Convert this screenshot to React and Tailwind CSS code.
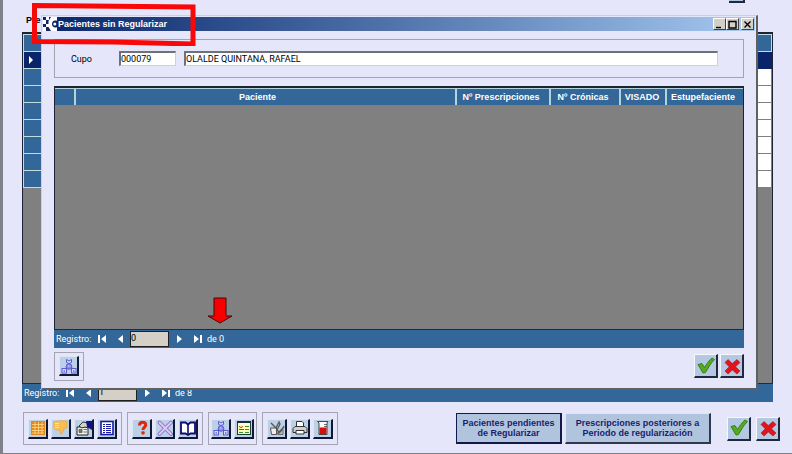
// src/App.jsx
import React, { useState } from "react";

const FONT = "font-['Roboto','Liberation_Sans',sans-serif]";
const BOLD = "font-['Liberation_Sans',sans-serif] font-bold";

/* ---------- icons ---------- */

function GridIcon() {
  return (
    <svg viewBox="0 0 16 16" className="w-4 h-4">
      <rect x="1" y="1" width="14" height="14" fill="#e08a1e" />
      <path d="M2 4.5h12M2 7.5h12M2 10.5h12M2 13h12M5 2v12M8.5 2v12M12 2v12" stroke="#ffd98a" strokeWidth=".8" />
    </svg>
  );
}

function ThumbDownIcon() {
  return (
    <svg viewBox="0 0 16 16" className="w-4 h-4">
      <path d="M1 2l4-1h9v7h-3v2L8 14.5 7 10H3L1 8z" fill="#fbbc50" stroke="#e9a94a" strokeWidth=".8" />
      <path d="M2 3.5h4M2 5.5h4M2 7.5h4" stroke="#fff0c4" strokeWidth=".8" />
    </svg>
  );
}

function HandCardIcon() {
  return (
    <svg viewBox="0 0 16 16" className="w-4 h-4">
      <path d="M1 7h11v8H1z" fill="#f0f0ea" stroke="#222" />
      <path d="M3 9.5h3v3H3zM7.5 9.5H11M7.5 12H11" fill="#777" stroke="#555" strokeWidth=".8" />
      <path d="M3 6l4-4 5 1v5L9 7 6 8z" fill="#d6d2c4" stroke="#222" strokeWidth=".9" />
      <path d="M10 1h6v9l-5-3z" fill="#10108c" />
    </svg>
  );
}

function ListIcon() {
  return (
    <svg viewBox="0 0 16 16" className="w-4 h-4">
      <rect x="2" y="1.5" width="12" height="13" fill="#fff" stroke="#1a1aa0" strokeWidth="1.6" />
      <path d="M4 4.5h8M4 6.5h8M4 8.5h8M4 10.5h8M4 12.5h8" stroke="#1a1aa0" strokeWidth="1.1" />
      <path d="M6.5 3v11" stroke="#fff" />
    </svg>
  );
}

function HelpIcon() {
  return (
    <svg viewBox="0 0 16 16" className="w-4 h-4">
      <path d="M5.5 5.5C5.5 3 7 2.3 8.5 2.3c2 0 3.2 1 3.2 2.7 0 2.2-2.7 2.2-2.7 5" fill="none" stroke="#e0280c" strokeWidth="3" />
      <rect x="7.4" y="11.3" width="3.2" height="3.2" rx="1" fill="#e0280c" />
    </svg>
  );
}

function DeleteIcon() {
  return (
    <svg viewBox="0 0 16 16" className="w-4 h-4">
      <path d="M2.5 2.5L14 14M14 2.5L2.5 14" stroke="#8a6fd0" strokeWidth="3.8" strokeLinecap="round" />
      <path d="M2.5 2.5L14 14M14 2.5L2.5 14" stroke="#dcc8f4" strokeWidth="2" strokeLinecap="round" />
    </svg>
  );
}

function BookIcon() {
  return (
    <svg viewBox="0 0 16 16" className="w-4 h-4">
      <path d="M1 2.5h4.5L8 4.5l2.5-2H15v11h-4.5L8 15l-2.5-1.5H1z" fill="#fff" stroke="#0c0c70" strokeWidth="1.8" />
      <path d="M8 5v9" stroke="#0c0c70" strokeWidth="1.6" />
    </svg>
  );
}

function NetworkIcon() {
  return (
    <svg viewBox="0 0 16 16" className="w-4 h-4">
      <g fill="#d8dcfa" stroke="#5a5ad0">
        <path d="M5.5 9.5L3.5 11M10.5 9.5l2 1.5" />
        <path d="M5.5 1.5L8 3l2.5-1.5v3L8 5.5l-2.500-1z" />
        <circle cx="8" cy="8.500" r="2.800" fill="#8c8cec" />
        <rect x="1" y="10.500" width="4.500" height="4.500" />
        <rect x="10.500" y="10.500" width="4.500" height="4.500" />
      </g>
      <path d="M3.200 12v2M12.800 12v2" stroke="#5a5ad0" />
      <path d="M7 8h1.500" stroke="#d8dcfa" />
    </svg>
  );
}

function FormIcon() {
  return (
    <svg viewBox="0 0 16 16" className="w-4 h-4">
      <rect x="1.5" y="1.5" width="13" height="13" fill="#fbfbb4" stroke="#1c3c3c" />
      <path d="M1 2h14" stroke="#12303a" strokeWidth="2" />
      <path d="M2 4h12" stroke="#fff" />
      <path d="M3 6.5l2 1 2-1M3 9.5h5" fill="none" stroke="#c03020" />
      <path d="M9 6.5h4M9 9.5h4M3 12.5h4M9 12.5h4" stroke="#3c8a30" />
    </svg>
  );
}

function ToolsIcon() {
  return (
    <svg viewBox="0 0 16 16" className="w-4 h-4">
      <path d="M1.5 8h6v6.500h-5z" fill="#eee" stroke="#555" />
      <path d="M2 3l5 5 3-6 1 2-3 6 3 3 4-7M8 14l7-7" fill="none" stroke="#555" strokeWidth="1.3" />
      <path d="M9 14.500l5-5v5z" fill="#bbb" stroke="#555" strokeWidth=".8" />
    </svg>
  );
}

function PrintIcon() {
  return (
    <svg viewBox="0 0 16 16" className="w-4 h-4">
      <path d="M4.5 7V1.5H10L11.5 3v4" fill="#fff" stroke="#333" />
      <path d="M3 6.5h10l2 2v4H1v-4z" fill="#d0d0d0" stroke="#333" />
      <path d="M4 10.5h8V14H4z" fill="#fff" stroke="#333" />
    </svg>
  );
}

function BeakerIcon() {
  return (
    <svg viewBox="0 0 16 16" className="w-4 h-4">
      <path d="M2.5 1.5H13L12 3v11.500H4V3z" fill="#fff" stroke="#444" />
      <path d="M4.5 7.5h7V14h-7z" fill="#d80c0c" />
      <path d="M9 4.5h3M9 6.500h3" stroke="#444" strokeWidth=".8" />
    </svg>
  );
}

function CheckIcon() {
  return (
    <svg viewBox="0 0 20 20" className="w-5 h-5">
      <path d="M2 8.5L6 7.500l2.500 4C10.500 8 13 4.500 16 2l2.500 1.500c-4 4-6 8-9 13L7 17z" fill="#55ab1e" stroke="#2f7a10" strokeWidth=".9" />
    </svg>
  );
}

function CrossIcon() {
  return (
    <svg viewBox="0 0 20 20" className="w-5 h-5">
      <path d="M6 3.500l4.300 4L15 3.500l3 3-4.500 4.300 4.500 4.200-3 3-4.700-4-4.300 4-3-3 4.200-4.200L3 6.500z" fill="#e0141c" stroke="#b80c10" strokeWidth=".6" />
    </svg>
  );
}

function AppLogo() {
  return (
    <svg viewBox="0 0 14 14" className="w-3.5 h-3.5 shrink-0">
      <rect width="14" height="14" fill="#16245c" />
      <path d="M3 0h3v3H3zM0 3h3v4H0zM3 7h3v3H3zM0 10h3v4H0z" fill="#fff" />
      <path d="M8 0h6v3.800c-3-1.300-5 .6-5 3.200s2 4.500 5 3.200V14H8L5.500 10V4z" fill="#fff" />
      <circle cx="11.800" cy="7" r="1.500" fill="#fff" />
    </svg>
  );
}

/* ---------- shared controls ---------- */

function ToolButton({ label, children }) {
  return (
    <button
      type="button"
      aria-label={label}
      className="w-5 h-5 flex items-center justify-center bg-[#bcd0e6] border-t border-l border-t-[#dce6f4] border-l-[#dce6f4] border-b-2 border-r-2 border-b-[#101838] border-r-[#101838]"
    >
      {children}
    </button>
  );
}

function BigButton({ label, children }) {
  return (
    <button
      type="button"
      aria-label={label}
      className="w-6 h-6 flex items-center justify-center bg-[#b4c8e2] border-t border-l border-t-[#f4f8ff] border-l-[#f4f8ff] border-b-2 border-r-2 border-b-[#202840] border-r-[#202840]"
    >
      {children}
    </button>
  );
}

function ToolGroup({ tight, children }) {
  return (
    <div className={`h-[33px] flex items-center gap-[3px] border border-[#a4a4b4] ${tight ? "px-0.5" : "px-1"}`}>
      {children}
    </div>
  );
}

function NavButton({ label, d }) {
  return (
    <button type="button" aria-label={label} className="w-[19px] h-4 flex items-center justify-center">
      <svg viewBox="0 0 10 10" className="w-2.5 h-2.5">
        <path d={d} fill="#fff" />
      </svg>
    </button>
  );
}

function RecordNav({ value, total }) {
  const [record, setRecord] = useState(value);

  return (
    <div className="h-[19px] flex items-center bg-[#336699] border-t border-[#1c2c40] text-[9px] leading-4 text-white">
      <span className="w-[38px] pl-0.5">Registro:</span>
      <NavButton label="Primero" d="M1 1h2v8H1zM9 1v8L4 5z" />
      <NavButton label="Anterior" d="M7 1v8L2 5z" />
      <input
        aria-label="Registro actual"
        className="w-[39px] h-4 pb-0.5 bg-[#d4d0c8] text-black border border-[#202020] outline-none"
        value={record}
        onChange={(e) => setRecord(e.target.value)}
      />
      <NavButton label="Siguiente" d="M3 1v8l5-4z" />
      <NavButton label="Último" d="M1 1v8l5-4zM7 1h2v8H7z" />
      <span>de {total}</span>
    </div>
  );
}

/* ---------- window behind ---------- */

function PrescriptionTable() {
  const rows = [0, 1, 2, 3, 4, 5, 6, 7, 8];

  return (
    <div className="border-t-2 border-l border-r border-[#1c2434] bg-[#808080] h-[351px]">
      <table className="w-full border-collapse">
        <tbody>
          {rows.map((row) => (
            <tr key={row} className="h-[17px]">
              <td className="w-[19px] p-0 bg-[#336699] border border-[#c4dcdc] data-[on=true]:bg-[#0a246a]" data-on={row === 1}>
                {row === 1 && (
                  <svg viewBox="0 0 6 8" className="w-1.5 h-2 ml-1">
                    <path d="M1 0v8l4-4z" fill="#fff" />
                  </svg>
                )}
              </td>
              <td
                className={
                  row === 0
                    ? "p-0 bg-[#336699] border border-[#c4dcdc]"
                    : row === 1
                      ? "p-0 bg-[#0a246a] border border-[#0a246a]"
                      : "p-0 bg-white border border-[#808080]"
                }
              />
            </tr>
          ))}
        </tbody>
      </table>
    </div>
  );
}

function BottomBar() {
  return (
    <div className="flex items-center pt-[10px]">
      <div className="flex gap-[5px]">
        <ToolGroup>
          <ToolButton label="Tabla"><GridIcon /></ToolButton>
          <ToolButton label="Rechazar"><ThumbDownIcon /></ToolButton>
          <ToolButton label="Ficha"><HandCardIcon /></ToolButton>
          <ToolButton label="Lista"><ListIcon /></ToolButton>
        </ToolGroup>
        <ToolGroup>
          <ToolButton label="Ayuda"><HelpIcon /></ToolButton>
          <ToolButton label="Eliminar"><DeleteIcon /></ToolButton>
          <ToolButton label="Libro"><BookIcon /></ToolButton>
        </ToolGroup>
        <ToolGroup tight>
          <ToolButton label="Red"><NetworkIcon /></ToolButton>
          <ToolButton label="Formulario"><FormIcon /></ToolButton>
        </ToolGroup>
        <ToolGroup>
          <ToolButton label="Herramientas"><ToolsIcon /></ToolButton>
          <ToolButton label="Imprimir"><PrintIcon /></ToolButton>
          <ToolButton label="Laboratorio"><BeakerIcon /></ToolButton>
        </ToolGroup>
      </div>

      <div className={`ml-auto flex gap-[3px] text-[9px] leading-[10px] text-[#1c1c6c] ${BOLD}`}>
        <button type="button" className="w-[106px] h-[31px] bg-[#b0c4de] border border-b-2 border-r-2 border-[#14184c]">
          Pacientes pendientes
          <br />
          de Regularizar
        </button>
        <button type="button" className="w-[146px] h-[31px] bg-[#b0c4de] border-t border-l border-t-[#dce6f4] border-l-[#dce6f4] border-b-2 border-r-2 border-b-[#303850] border-r-[#303850]">
          Prescripciones posteriores a
          <br />
          Periodo de regularización
        </button>
      </div>
      <div className="flex gap-[5px] ml-4">
        <BigButton label="Aceptar"><CheckIcon /></BigButton>
        <BigButton label="Cancelar"><CrossIcon /></BigButton>
      </div>
    </div>
  );
}

/* ---------- dialog ---------- */

function WindowButton({ label, d }) {
  return (
    <button
      type="button"
      aria-label={label}
      className="w-[13px] h-3 flex items-center justify-center bg-[#d4d0c8] border-t border-l border-t-white border-l-white border-b border-r border-b-[#404040] border-r-[#404040]"
    >
      <svg viewBox="0 0 9 9" className="w-[9px] h-[9px]">
        <path d={d} fill="none" stroke="#000" strokeWidth="1.4" />
      </svg>
    </button>
  );
}

function PacientesDialog() {
  const [cupo, setCupo] = useState("000079");
  const [nombre, setNombre] = useState("OLALDE QUINTANA, RAFAEL");
  const th = "font-bold border-l-2 border-[#b4d4dc]";
  const input = "h-[15px] bg-white border-t-2 border-l-2 border-t-[#707078] border-l-[#707078] border-b border-r border-b-[#d4d0c8] border-r-[#d4d0c8] outline-none";

  return (
    <section
      role="dialog"
      aria-label="Pacientes sin Regularizar"
      className="absolute left-[38px] right-[34px] top-[15px] bg-[#e6e6fa] border-t border-l border-t-[#d4d0c8] border-l-[#d4d0c8] border-b-2 border-r-2 border-b-[#606060] border-r-[#606060]"
    >
      <header className="mt-px ml-px mr-px h-[14px] pr-px flex items-center bg-linear-to-r from-[#0a246a] to-[#a6caf0]">
        <AppLogo />
        <h1 className={`pl-px text-[9px] leading-3 text-white ${BOLD}`}>Pacientes sin Regularizar</h1>
        <div className="ml-auto flex">
          <WindowButton label="Minimizar" d="M1 7.500h5" />
          <WindowButton label="Maximizar" d="M1 1.500h7v6.500H1z" />
          <span className="w-0.5" />
          <WindowButton label="Cerrar" d="M1.500 1.500l6 6M7.500 1.500l-6 6" />
        </div>
      </header>

      <div className="px-3 pt-2">
        <div className="h-[39px] pl-4 pr-[25px] flex items-center gap-2 border border-[#a4a4b0] text-[9px] leading-3 text-black">
          <label htmlFor="cupo" className="w-10">Cupo</label>
          <input id="cupo" className={`w-[57px] ${input}`} value={cupo} onChange={(e) => setCupo(e.target.value)} />
          <input
            aria-label="Nombre"
            className={`flex-1 ${input}`}
            value={nombre}
            onChange={(e) => setNombre(e.target.value)}
          />
        </div>

        <div className="mt-2 bg-[#808080] border-t-2 border-l border-r border-[#1c2434]">
          <table className={`w-full table-fixed border-collapse text-[9px] leading-3 text-white bg-[#336699] border-t border-[#b4d4dc] ${BOLD}`}>
            <thead>
              <tr className="h-4">
                <th className="w-5 p-0" />
                <th className={`p-0 pr-4 ${th}`}>Paciente</th>
                <th className={`w-[94px] p-0 pr-1 ${th}`}>Nº Prescripciones</th>
                <th className={`w-[70px] p-0 pr-1 ${th}`}>Nº Crónicas</th>
                <th className={`w-[46px] p-0 pr-0.5 ${th}`}>VISADO</th>
                <th className={`w-[77px] p-0 pr-1 ${th}`}>Estupefaciente</th>
              </tr>
            </thead>
          </table>
          <div className="h-[224px]" />
        </div>
        <RecordNav value="0" total={0} />

        <div className="flex items-center justify-between pt-1 pb-[7px]">
          <div className="w-[30px] h-[29px] flex items-center justify-center border border-[#a4a4b4]">
            <ToolButton label="Red"><NetworkIcon /></ToolButton>
          </div>
          <div className="flex gap-0.5">
            <BigButton label="Aceptar"><CheckIcon /></BigButton>
            <BigButton label="Cancelar"><CrossIcon /></BigButton>
          </div>
        </div>
      </div>
    </section>
  );
}

export default function App() {
  return (
    <main className={`relative min-h-screen overflow-hidden bg-[#e6e6fa] border-l-[3px] border-b-2 border-[#808088] ${FONT}`}>
      <div className="pl-[19px] pr-[19px]">
        <div className="h-8 flex justify-between">
          <h2 className={`pl-1 pt-3.5 text-[9px] leading-3 text-black ${BOLD}`}>Pre</h2>
          <span className="w-4 h-[3px] mr-7 bg-[#b0c4de] border-b-2 border-r-2 border-[#202840]" />
        </div>
        <PrescriptionTable />
        <RecordNav value="1" total={8} />
      </div>
      <div className="pl-5 pr-3 pb-2">
        <BottomBar />
      </div>

      <PacientesDialog />

      {/* annotations drawn over the windows */}
      <svg viewBox="0 0 166 44" className="absolute left-[28px] top-[2px] w-[166px] h-11">
        <path d="M3.500 3.500L162 5v37l-80-2-78.500-.5z" fill="none" stroke="#f80808" strokeWidth="5" />
      </svg>
      <svg viewBox="0 0 26 27" className="absolute left-[204px] top-[297px] w-[26px] h-[27px]">
        <path d="M7 1h12v18h6l-12 7-12-7h6z" fill="#f80000" stroke="#400808" />
      </svg>
    </main>
  );
}
